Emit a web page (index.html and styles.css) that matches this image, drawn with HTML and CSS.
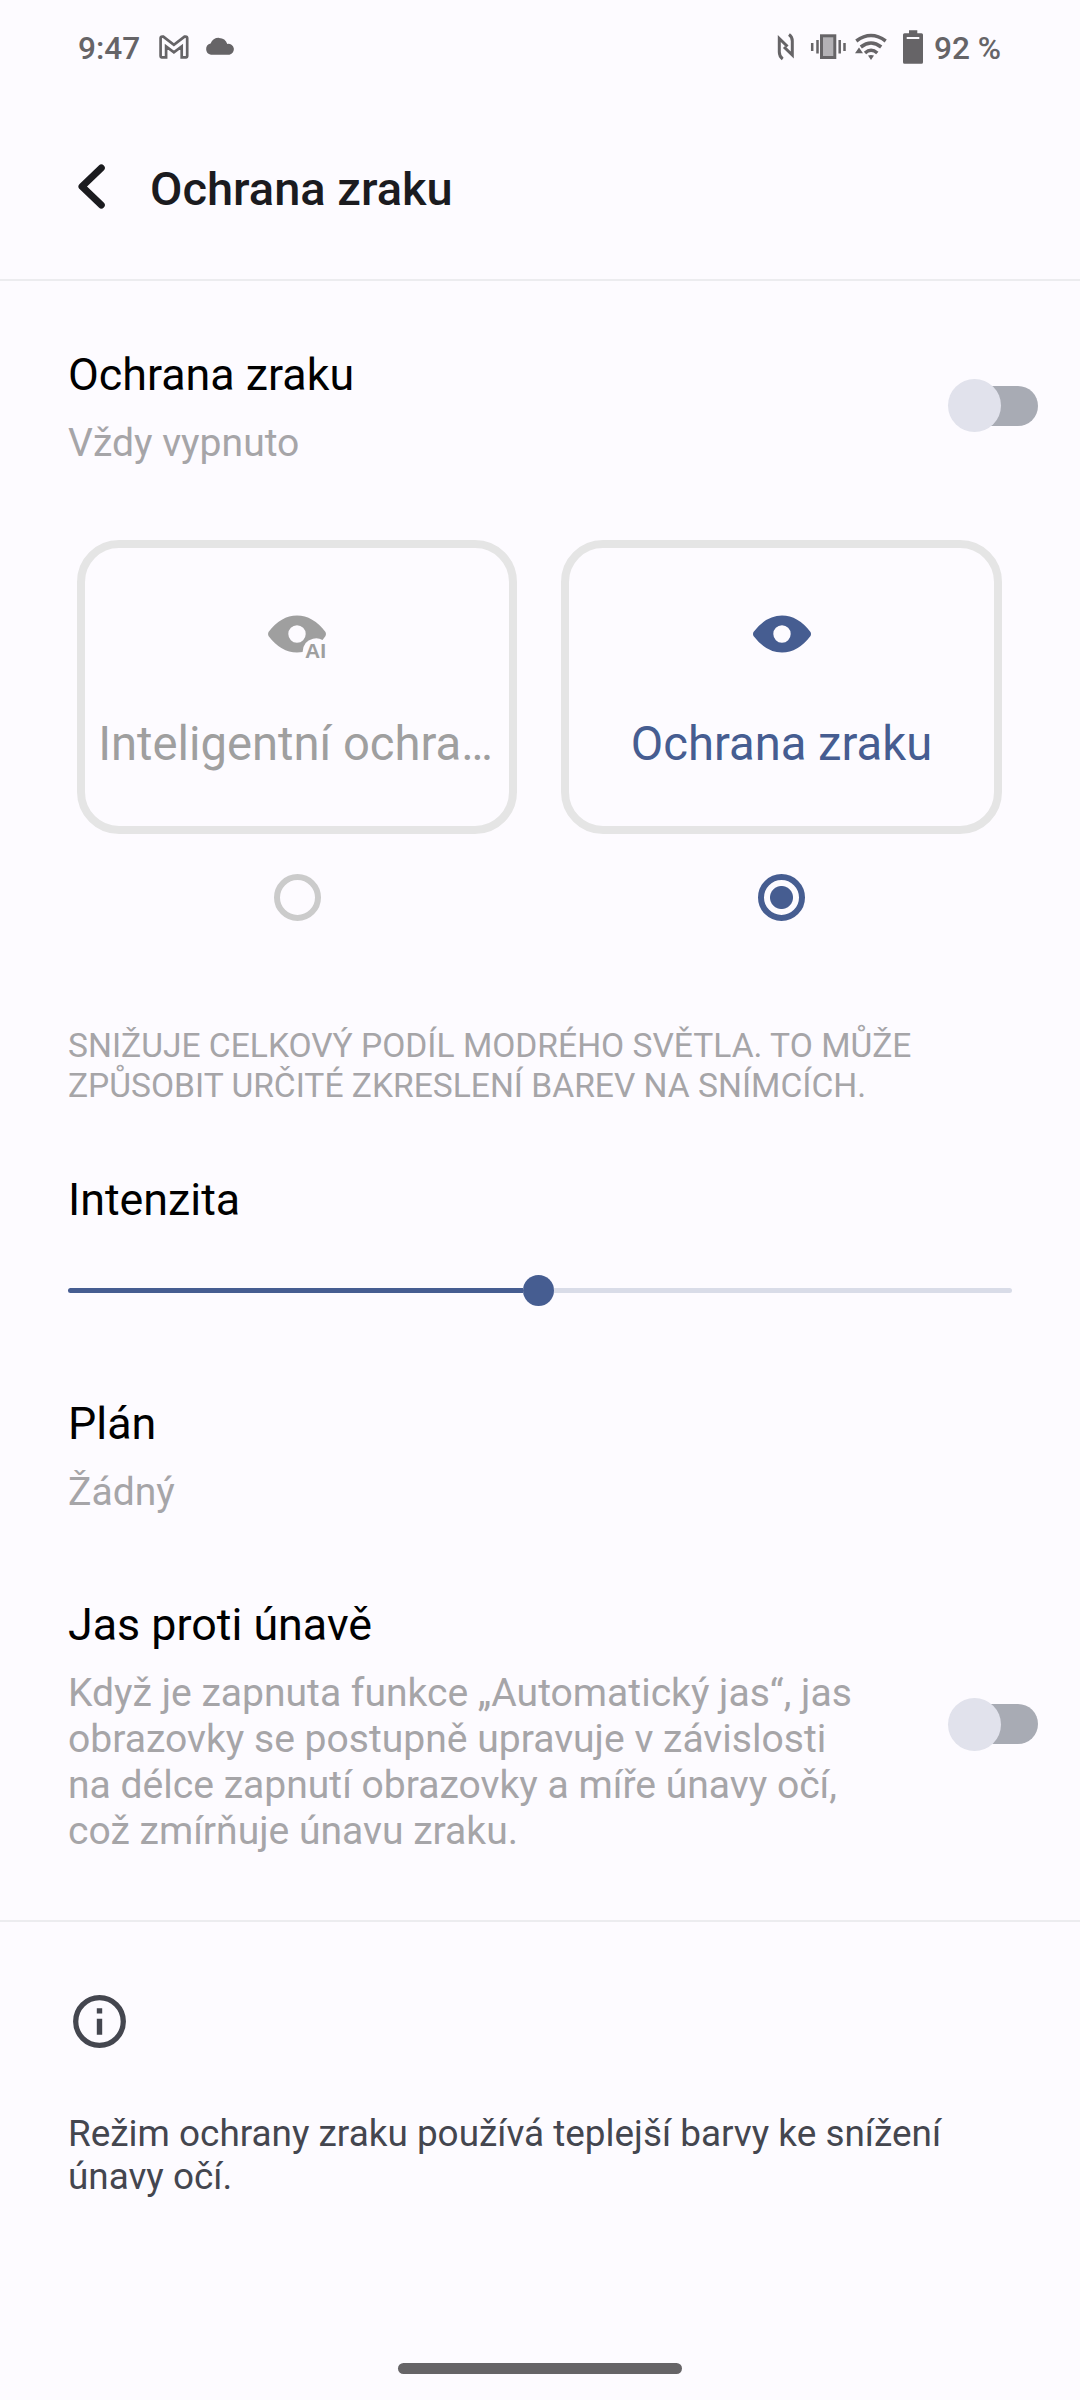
FILE: index.html
```html
<!DOCTYPE html>
<html lang="cs">
<head>
<meta charset="utf-8">
<title>Ochrana zraku</title>
<link rel="stylesheet" href="styles.css">
</head>
<body>
<div class="screen">
  <div class="status">
    <span class="clock">9:47</span>
    <svg class="ic-notif" width="90" height="30" viewBox="0 0 90 30">
      <path d="M2.600 21.300V3.300Q2.600 1.700 4.300 1.700H5.300L15.900 9.900L26.500 1.700H27.500Q29.200 1.700 29.200 3.300V21.300Q29.200 22.300 28.300 22.300H23.700V11.500L15.900 17.300L8.100 11.500V22.300H3.500Q2.600 22.300 2.600 21.300Z" fill="none" stroke="#666467" stroke-width="2.700"/>
      <path d="M53 19.700A5.700 5.700 0 0 1 52.600 8.500A8.900 8.900 0 0 1 69.300 8.900A5.500 5.500 0 0 1 71.500 19.700Z" fill="#666467"/>
    </svg>
    <svg class="ic-system" width="150" height="36" viewBox="0 0 150 36">
      <g fill="none" stroke="#666467" stroke-width="3">
        <path d="M7.700 30C5 28 4.300 26 4.300 23V9.500L12.500 17.500"/>
        <path d="M14 5.500C16.800 7.500 17.300 9.500 17.300 12V26L9 18"/>
      </g>
      <path d="M37.200 14v8M42.500 11v13.500M64.700 11v13.500M69.500 14v8" stroke="#666467" stroke-width="2.500"/>
      <rect x="46.500" y="6.800" width="13.300" height="21.700" fill="#b3b1b5" stroke="#666467" stroke-width="3"/>
      <g fill="none" stroke="#666467" stroke-width="3.500">
        <path d="M81.300 12Q96 1 110.700 12"/>
        <path d="M85.800 18Q96 10 106.200 18"/>
        <path d="M90 24Q96 18.500 102.300 24"/>
      </g>
      <path d="M93 26.500Q96 25.500 99 26.500L96 31ZM80 24.300L84 18.500L88 24.300Z" fill="#666467"/>
      <path d="M134 1.200H142.300V4.200H146.500Q148 4.200 148 5.700V33.200Q148 34.700 146.500 34.700H129.500Q128 34.700 128 33.200V5.700Q128 4.200 129.500 4.200H134Z" fill="#666467"/>
      <path d="M131.700 9H144.300" stroke="#fdfbff" stroke-width="2"/>
    </svg>
    <span class="battery">92 %</span>
  </div>

  <div class="appbar">
    <svg width="32" height="50" viewBox="0 0 32 50"><path d="M26.300 7L7 25.500L26.300 44" fill="none" stroke="#1b1b1f" stroke-width="7" stroke-linecap="round" stroke-linejoin="round"/></svg>
    <h1 class="title">Ochrana zraku</h1>
  </div>

  <div class="row row-main">
    <div class="texts">
      <div class="name">Ochrana zraku</div>
      <div class="sub">Vždy vypnuto</div>
    </div>
    <div class="toggle"><div class="knob"></div></div>
  </div>

  <div class="modes">
    <div class="mode">
      <div class="card card-muted">
        <svg class="eye" width="60" height="56" viewBox="0 0 60 56">
          <path fill="#9f9f9f" fill-rule="evenodd" d="M1.500 18Q0.500 20 1.500 22Q14 38.500 30 38.500C32 38.500 34 38.300 35.600 38Q36 27 46 24.700Q51 23.300 55.500 26L58.500 22Q59.500 20 58.500 18Q46 1.500 30 1.500Q14 1.500 1.500 18ZM30 11.300A8.700 8.700 0 1 1 30 28.700A8.700 8.700 0 1 1 30 11.300Z"/>
          <text class="ai" x="38" y="44">AI</text>
        </svg>
        <div class="label">Inteligentní ochra…</div>
      </div>
      <div class="radio"></div>
    </div>
    <div class="mode mode-wide">
      <div class="card card-active">
        <svg class="eye" width="60" height="56" viewBox="0 0 60 56">
          <path fill="#465d91" fill-rule="evenodd" d="M1.500 18Q0.500 20 1.500 22Q14 38.500 30 38.500Q46 38.500 58.500 22Q59.500 20 58.500 18Q46 1.500 30 1.500Q14 1.500 1.500 18ZM30 11.300A8.700 8.700 0 1 1 30 28.700A8.700 8.700 0 1 1 30 11.300Z"/>
        </svg>
        <div class="label">Ochrana zraku</div>
      </div>
      <div class="radio radio-on"></div>
    </div>
  </div>

  <p class="note">SNIŽUJE CELKOVÝ PODÍL MODRÉHO SVĚTLA. TO MŮŽE<br>ZPŮSOBIT URČITÉ ZKRESLENÍ BAREV NA SNÍMCÍCH.</p>

  <div class="name intensity">Intenzita</div>
  <div class="slider"><div class="filled"></div><div class="thumb"></div><div class="rest"></div></div>

  <div class="row row-plan">
    <div class="texts">
      <div class="name">Plán</div>
      <div class="sub">Žádný</div>
    </div>
  </div>

  <div class="row row-fatigue">
    <div class="texts">
      <div class="name">Jas proti únavě</div>
      <div class="sub">Když je zapnuta funkce „Automatický jas“, jas<br>obrazovky se postupně upravuje v závislosti<br>na délce zapnutí obrazovky a míře únavy očí,<br>což zmírňuje únavu zraku.</div>
    </div>
    <div class="toggle"><div class="knob"></div></div>
  </div>

  <div class="footer">
    <svg class="info" width="53" height="53" viewBox="0 0 53 53">
      <circle cx="26.500" cy="26.500" r="23.800" fill="none" stroke="#44464f" stroke-width="5.300"/>
      <path d="M23.800 13.200h5.400v5.400h-5.400zM23.800 23.800h5.400v16h-5.400z" fill="#44464f"/>
    </svg>
    <p class="hint">Režim ochrany zraku používá teplejší barvy ke snížení<br>únavy očí.</p>
  </div>
  <div class="homebar"></div>
</div>
</body>
</html>
```
FILE: styles.css
```css
* { box-sizing: border-box; }

body {
  margin: 0;
  background: #fdfbff;
  font-family: Roboto, "Noto Sans", sans-serif;
  color: #000;
}

h1, p { margin: 0; font-weight: 400; }
svg { display: block; flex: none; }

.screen {
  width: 1080px;
  height: 2400px;
  display: flex;
  flex-direction: column;
  overflow: hidden;
}

.status {
  height: 96px;
  padding: 29px 0 0 78px;
  display: flex;
  align-items: flex-start;
  font-size: 31.600px;
  line-height: 40px;
  font-weight: 500;
  color: #666467;
}
.clock { width: 80px; }
.ic-notif { margin-top: 6px; }
.ic-system { margin-left: 527px; }
.battery { margin-left: 9px; white-space: nowrap; }

.appbar {
  height: 185px;
  padding: 65px 0 0 75px;
  display: flex;
  gap: 43px;
  align-items: flex-start;
  border-bottom: 2px solid #ececef;
}
.title {
  font-size: 47px;
  line-height: 56px;
  font-weight: 500;
  color: #1b1b1f;
}

.row { display: flex; padding-left: 68px; }
.row-main { height: 259px; padding-top: 67px; }
.texts { width: 880px; flex: none; }
.name { font-size: 44.800px; line-height: 54px; }
.sub {
  margin-top: 18px;
  font-size: 39.100px;
  line-height: 46px;
  color: #a6a5a8;
}

.toggle {
  width: 90px;
  height: 40px;
  margin-top: 37.500px;
  display: flex;
  align-items: center;
  border-radius: 20px;
  background: linear-gradient(#a8abb4, #a8abb4) right center / 64px 40px no-repeat;
}
.knob { width: 53px; height: 53px; border-radius: 50%; background: #e1e2ec; flex: none; }

.modes {
  height: 480px;
  padding-left: 77px;
  display: flex;
  gap: 44px;
}
.mode { width: 440px; }
.mode-wide { width: 441px; }
.card {
  height: 294px;
  padding-top: 66px;
  border: 8px solid #e5e5e5;
  border-radius: 42px;
  display: flex;
  flex-direction: column;
  align-items: center;
}
.label {
  margin-top: 46px;
  font-size: 47.200px;
  line-height: 56px;
  white-space: nowrap;
}
.card-muted { color: #9f9f9f; }
.card-muted .label { padding-right: 3px; }
.card-active { color: #465d91; }
.ai { font-family: "Liberation Sans", sans-serif; font-size: 21px; font-weight: 700; fill: #9f9f9f; }

.radio {
  width: 47px;
  height: 47px;
  margin: 40px auto 0;
  border: 6px solid #cbcbcb;
  border-radius: 50%;
}
.radio-on {
  border-color: #465d91;
  background: radial-gradient(circle, #465d91 11px, transparent 12px);
}

.note {
  height: 150px;
  padding: 6px 0 0 68px;
  font-size: 33.600px;
  line-height: 40px;
  color: #a6a5a8;
}

.intensity { padding-left: 68px; margin-top: 3px; height: 102px; }
.slider {
  width: 944px;
  height: 31px;
  margin-left: 68px;
  display: flex;
  align-items: center;
}
.filled { width: 455px; height: 5px; border-radius: 3px 0 0 3px; background: #465d91; }
.thumb { width: 31px; height: 31px; border-radius: 50%; background: #465d91; }
.rest { flex: 1; height: 5px; border-radius: 0 3px 3px 0; background: #d9dce8; }

.row-plan { height: 201px; margin-top: 91px; }
.row-fatigue { height: 322px; }
.row-fatigue .toggle { margin-top: 106px; }

.footer {
  border-top: 2px solid #ececef;
  padding: 73px 0 0 68px;
  height: 443px;
}
.info { margin-left: 5px; }
.hint {
  margin-top: 64px;
  font-size: 36.900px;
  line-height: 43px;
  color: #44464f;
}
.homebar {
  width: 284px;
  height: 11px;
  margin: 0 auto;
  border-radius: 6px;
  background: #666467;
}
```
